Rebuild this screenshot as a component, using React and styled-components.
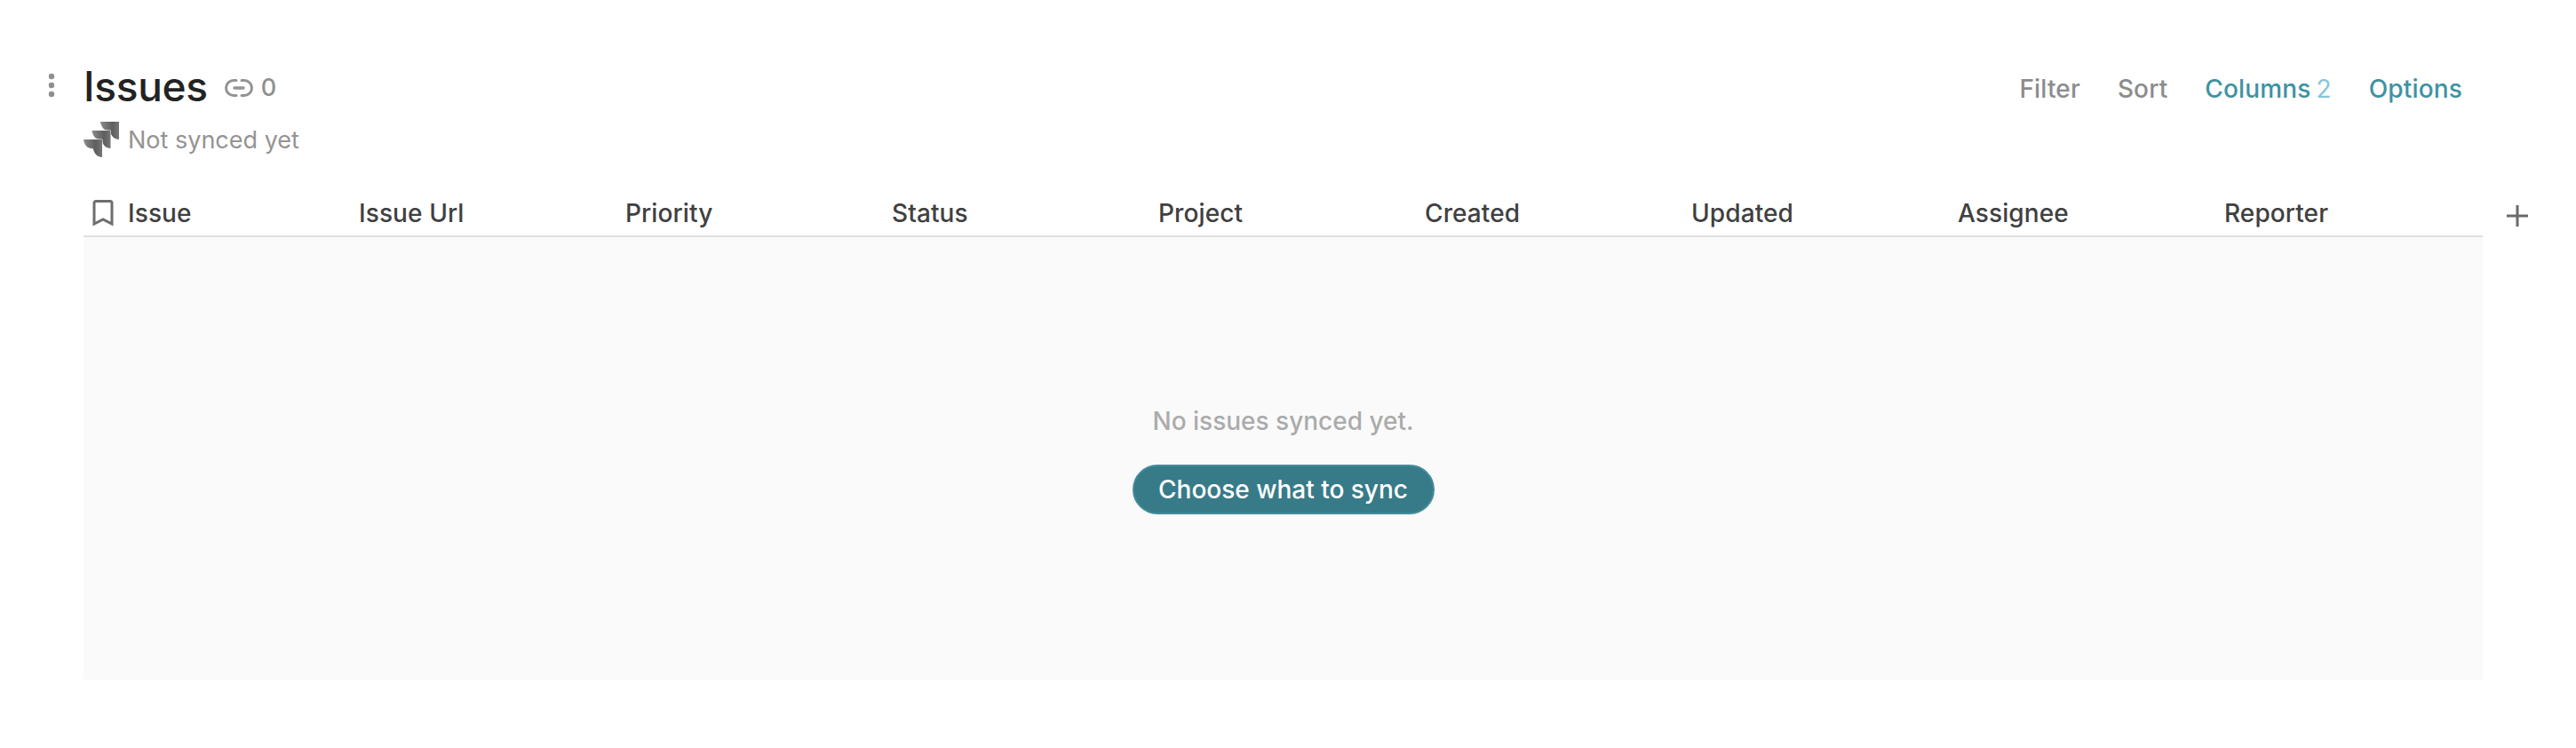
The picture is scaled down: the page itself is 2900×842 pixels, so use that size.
import React from 'react';
import styled, { createGlobalStyle } from 'styled-components';

const GlobalStyle = createGlobalStyle`
  html, body {
    margin: 0;
    padding: 0;
    background: #fff;
    font-family: Inter, "Noto Sans", sans-serif;
  }
`;

const Page = styled.div`
  width: 2900px;
  height: 842px;
  padding: 70px 0 0 44px;
  box-sizing: border-box;
  display: flex;
  overflow: hidden;
`;

const Handle = styled.div`
  width: 50px;
  flex: none;
  padding: 12px 0 0 9px;
  box-sizing: border-box;
  svg {
    display: block;
  }
`;

const Main = styled.div`
  width: 2800px;
  flex: none;
`;

const HeaderRow = styled.div`
  display: flex;
  justify-content: space-between;
  align-items: center;
  width: 2701px;
  height: 54px;
  padding-right: 23px;
  box-sizing: border-box;
`;

const TitleGroup = styled.div`
  display: flex;
  align-items: center;
`;

const Title = styled.h1`
  margin: 0;
  font-size: 46px;
  font-weight: 500;
  line-height: 54px;
  letter-spacing: -0.3px;
  color: #232323;
`;

const LinkCount = styled.span`
  display: flex;
  align-items: center;
  gap: 9px;
  margin: 3px 0 0 19px;
  font-size: 27px;
  font-weight: 500;
  color: #8f8f8f;
`;

const Actions = styled.div`
  display: flex;
  align-items: center;
  gap: 42px;
  margin-top: 6px;
`;

const Action = styled.span`
  font-size: 28px;
  font-weight: 500;
  letter-spacing: 0.15px;
  color: ${(p) => (p.$active ? '#4092a2' : '#8c8c8c')};
`;

const ActionCount = styled.span`
  margin-left: 6px;
  font-weight: 400;
  color: #84c6d6;
`;

const SyncRow = styled.div`
  display: flex;
  align-items: center;
  gap: 10px;
  height: 40px;
  margin-top: 13px;
  font-size: 27px;
  color: #949494;
`;

const TableRow = styled.div`
  display: flex;
  align-items: flex-start;
  margin-top: 39px;
`;

const Table = styled.div`
  width: 2701px;
  flex: none;
`;

const Columns = styled.div`
  display: flex;
  height: 47px;
  padding-bottom: 2px;
  border-bottom: 2px solid #e1e1e1;
  box-sizing: content-box;
`;

const Column = styled.div`
  width: 300px;
  flex: none;
  display: flex;
  align-items: center;
  gap: 16px;
  padding-left: 10px;
  box-sizing: border-box;
  font-size: 28px;
  font-weight: 500;
  letter-spacing: 0.1px;
  color: #404040;
`;

const AddColumn = styled.div`
  margin: 15px 0 0 27px;
  flex: none;
  svg {
    display: block;
  }
`;

const EmptyBody = styled.div`
  height: 498px;
  background: #fafafa;
  display: flex;
  flex-direction: column;
  align-items: center;
  padding-top: 190px;
  box-sizing: border-box;
`;

const EmptyText = styled.div`
  font-size: 28px;
  font-weight: 500;
  line-height: 34px;
  color: #ababab;
`;

const SyncButton = styled.button`
  margin-top: 32px;
  height: 56px;
  width: 340px;
  padding: 0;
  border: 2px solid #438c9c;
  border-radius: 28px;
  background: #387b88;
  color: #fff;
  font-family: inherit;
  font-size: 28px;
  font-weight: 500;
`;

const columns = ['Issue', 'Issue Url', 'Priority', 'Status', 'Project', 'Created', 'Updated', 'Assignee', 'Reporter'];

const jiraPiece = 'M19 0H40V20C35 20 31 16 30 11C29.5 10 29 10 28 10C23 10 20 6 19 0Z';

function JiraMark() {
  return (
    <svg width="40" height="40" viewBox="0 0 40 40">
      <defs>
        <linearGradient id="jira-shade" x1="0" y1="0" x2="1" y2="0">
          <stop offset="0" stopColor="#8c8c8c" />
          <stop offset="0.65" stopColor="#5e5e5e" />
          <stop offset="1" stopColor="#777" />
        </linearGradient>
      </defs>
      <path d={jiraPiece} fill="url(#jira-shade)" />
      <path d={jiraPiece} transform="translate(-9.5 10)" fill="url(#jira-shade)" stroke="#fff" strokeWidth="1" paintOrder="stroke" />
      <path d={jiraPiece} transform="translate(-19 20)" fill="url(#jira-shade)" stroke="#fff" strokeWidth="1" paintOrder="stroke" />
    </svg>
  );
}

export default function App() {
  return (
    <Page>
      <GlobalStyle />
      <Handle>
        <svg width="10" height="28" viewBox="0 0 10 28" fill="#8e8e8e">
          <circle cx="5" cy="4" r="3.2" />
          <circle cx="5" cy="14" r="3.2" />
          <circle cx="5" cy="24" r="3.2" />
        </svg>
      </Handle>
      <Main>
        <HeaderRow>
          <TitleGroup>
            <Title>Issues</Title>
            <LinkCount>
              <svg width="32" height="20" viewBox="0 0 32 20" fill="none" stroke="#939393" strokeWidth="3" strokeLinecap="round">
                <path d="M13 1.5H10a8.5 8.5 0 0 0 0 17h3" />
                <path d="M19 1.5h3a8.5 8.5 0 0 1 0 17h-3" />
                <path d="M11 10h10" strokeWidth="3.5" />
              </svg>
              0
            </LinkCount>
          </TitleGroup>
          <Actions>
            <Action>Filter</Action>
            <Action>Sort</Action>
            <Action $active>
              Columns<ActionCount>2</ActionCount>
            </Action>
            <Action $active>Options</Action>
          </Actions>
        </HeaderRow>
        <SyncRow>
          <JiraMark />
          Not synced yet
        </SyncRow>
        <TableRow>
          <Table>
            <Columns>
              {columns.map((name, i) => (
                <Column key={name}>
                  {i === 0 && (
                    <svg width="24" height="30" viewBox="0 0 24 30" fill="none" stroke="#6e6e6e" strokeWidth="3">
                      <path d="M2 3.5a2 2 0 0 1 2-2h16a2 2 0 0 1 2 2V27l-10-5-10 5z" />
                    </svg>
                  )}
                  {name}
                </Column>
              ))}
            </Columns>
            <EmptyBody>
              <EmptyText>No issues synced yet.</EmptyText>
              <SyncButton>Choose what to sync</SyncButton>
            </EmptyBody>
          </Table>
          <AddColumn>
            <svg width="24" height="24" viewBox="0 0 24 24" stroke="#6a6a6a" strokeWidth="3">
              <path d="M12 0v24M0 12h24" />
            </svg>
          </AddColumn>
        </TableRow>
      </Main>
    </Page>
  );
}
